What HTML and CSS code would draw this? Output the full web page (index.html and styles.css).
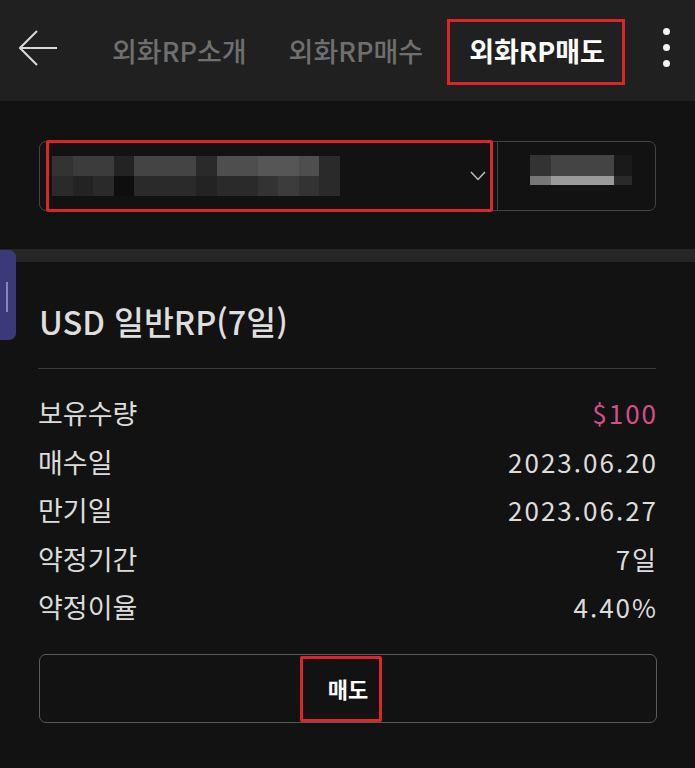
FILE: index.html
```html
<!DOCTYPE html>
<html lang="ko">
<head>
    <meta charset="UTF-8">
    <title>외화RP매도</title>
    <link rel="stylesheet" href="styles.css">
</head>
<body>

<div class="topbar">
    <svg class="backArrow" width="40" height="38" viewBox="0 0 40 38">
        <polyline points="18,2 1,19 18,36" fill="none" stroke="#d8d8d8" stroke-width="2"/>
        <line x1="1" y1="19" x2="38" y2="19" stroke="#d8d8d8" stroke-width="2"/>
    </svg>
    <div class="tabs">
        <div class="tab">외화RP소개</div>
        <div class="tab">외화RP매수</div>
        <div class="tab tabActive">외화RP매도</div>
    </div>
    <div class="kebab">
        <span></span><span></span><span></span>
    </div>
</div>

<div class="selectArea">
    <div class="selectRow">
        <div class="accountBox">
            <div class="mosaic mosaicLeft">
                <i class="s3"></i><i class="s4"></i><i class="s4"></i><i class="s1"></i><i class="s5"></i><i class="s5"></i><i class="s5"></i><i class="s2"></i><i class="s6"></i><i class="s6"></i><i class="s7"></i><i class="s7"></i><i class="s6"></i><i class="s2"></i>
                <i class="s2"></i><i class="s1"></i><i class="s2"></i><i class="s0"></i><i class="s2"></i><i class="s2"></i><i class="s2"></i><i class="s1"></i><i class="s2"></i><i class="s2"></i><i class="s3"></i><i class="s4"></i><i class="s3"></i><i class="s2"></i>
            </div>
            <svg class="chevron" width="16" height="10" viewBox="0 0 16 10">
                <polyline points="1,1 8,8.5 15,1" fill="none" stroke="#bdbdbd" stroke-width="1.5"/>
            </svg>
            <div class="markBox markSelect"></div>
        </div>
        <div class="nameBox">
            <div class="mosaic mosaicRight">
                <i class="s3"></i><i class="s5"></i><i class="sd"></i>
                <i class="s8"></i><i class="s9"></i><i class="s2"></i>
            </div>
        </div>
    </div>
</div>

<div class="band"></div>
<div class="sideTab"><span></span></div>

<div class="detail">
    <h1 class="productTitle">USD 일반RP(7일)</h1>

    <div class="infoList">
        <div class="infoRow"><span class="label">보유수량</span><span class="value valuePink">$100</span></div>
        <div class="infoRow"><span class="label">매수일</span><span class="value">2023.06.20</span></div>
        <div class="infoRow"><span class="label">만기일</span><span class="value">2023.06.27</span></div>
        <div class="infoRow"><span class="label">약정기간</span><span class="value">7일</span></div>
        <div class="infoRow"><span class="label">약정이율</span><span class="value">4.40%</span></div>
    </div>

    <button class="sellButton">
        매도
        <span class="markBox markButton"></span>
    </button>
</div>

</body>
</html>
```

FILE: styles.css
```css
body {
    margin: 0;
    background-color: #121212;
    font-family: "Noto Sans CJK KR", "Noto Sans", sans-serif;
    color: #dcdcdc;
    position: relative;
}

/* top navigation */
.topbar {
    height: 101px;
    background-color: #202020;
    display: flex;
    align-items: flex-start;
    padding-left: 19px;
}

.backArrow {
    margin-top: 29px;
}

.tabs {
    display: flex;
    margin-left: 32px;
    margin-top: 19px;
}

.tab {
    height: 60px;
    line-height: 57px;
    padding: 0 18px;
    border: 3px solid transparent;
    font-size: 27px;
    font-weight: 500;
    color: #6f6f6f;
    white-space: nowrap;
}

.tabActive {
    border-color: #d8262c;
    color: #ffffff;
    font-weight: 700;
    padding: 0 17px 0 19px;
    margin-left: 3px;
}

.kebab {
    margin-left: auto;
    margin-right: 25px;
    margin-top: 28px;
    display: flex;
    flex-direction: column;
    gap: 9px;
}

.kebab span {
    width: 7px;
    height: 7px;
    border-radius: 50%;
    background-color: #f2f2f2;
}

/* account select */
.selectArea {
    padding: 40px 39px 38px 39px;
}

.selectRow {
    display: flex;
    height: 68px;
    border: 1px solid #444444;
    border-radius: 7px;
}

.accountBox {
    position: relative;
    width: 445px;
    border-right: 1px solid #444444;
    display: flex;
    align-items: center;
    padding-left: 12px;
}

.nameBox {
    flex: 1;
    display: flex;
    align-items: flex-start;
    padding-top: 13px;
    padding-left: 32px;
}

.mosaic {
    display: grid;
}

.mosaicLeft {
    width: 288px;
    grid-template-columns: repeat(14, 1fr);
    grid-template-rows: 20px 20px;
}

.mosaicRight {
    grid-template-columns: 21px 63px 18px;
    grid-template-rows: 21px 9px;
}

.s0 { background-color: #0e0e0e; }
.s1 { background-color: #232323; }
.s2 { background-color: #2a2a2a; }
.s3 { background-color: #333333; }
.s4 { background-color: #3c3c3c; }
.s5 { background-color: #444444; }
.s6 { background-color: #4e4e4e; }
.s7 { background-color: #565656; }
.s8 { background-color: #777777; }
.s9 { background-color: #9a9a9a; }
.sd { background-color: #1a1a1a; }

.chevron {
    margin-left: auto;
    margin-right: 11px;
}

/* red annotation boxes */
.markBox {
    position: absolute;
    border: 3px solid #d8262c;
    border-radius: 2px;
    box-sizing: border-box;
}

.markSelect {
    left: 6px;
    top: -2px;
    width: 447px;
    height: 72px;
}

.markButton {
    left: 260px;
    top: 1px;
    width: 82px;
    height: 66px;
}

/* divider band and side handle */
.band {
    height: 13px;
    background-color: #262626;
}

.sideTab {
    position: absolute;
    left: 0;
    top: 250px;
    width: 16px;
    height: 90px;
    background-color: #3b3a78;
    border-radius: 0 7px 7px 0;
}

.sideTab span {
    position: absolute;
    left: 6px;
    top: 32px;
    width: 2px;
    height: 30px;
    background-color: #8584c4;
}

/* detail section */
.detail {
    padding: 38px 39px 0 38px;
}

.productTitle {
    margin: 0;
    font-size: 32.5px;
    font-weight: 500;
    line-height: 42px;
    color: #dedede;
    padding-left: 1px;
    padding-bottom: 26px;
    border-bottom: 1px solid #3a3a3a;
}

.infoList {
    padding-top: 20px;
    padding-bottom: 22px;
}

.infoRow {
    display: flex;
    justify-content: space-between;
    height: 48.5px;
    line-height: 48.5px;
    font-size: 27px;
}

.label {
    color: #dcdcdc;
}

.value {
    color: #dcdcdc;
    font-size: 26px;
    letter-spacing: 2px;
    margin-right: -2px;
}

.valuePink {
    color: #d24f8b;
}

.sellButton {
    position: relative;
    display: block;
    width: 618px;
    height: 69px;
    margin-left: 1px;
    background-color: #121212;
    border: 1px solid #5a5a5a;
    border-radius: 7px;
    color: #ffffff;
    font-family: "Noto Sans CJK KR", "Noto Sans", sans-serif;
    font-size: 22px;
    font-weight: 700;
    padding: 0;
}
```
